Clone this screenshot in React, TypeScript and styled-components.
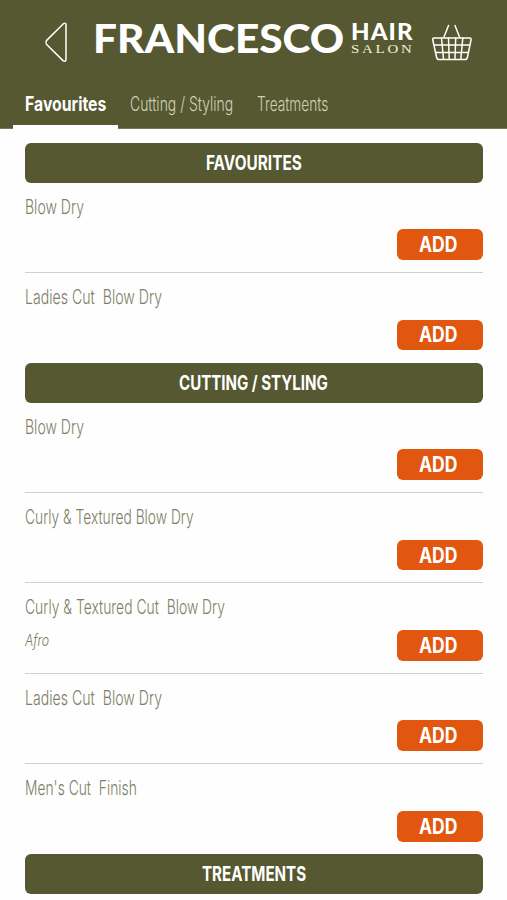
import React, { useLayoutEffect, useRef, useState } from "react";
import styled, { createGlobalStyle } from "styled-components";

const OLIVE = "#555830";
const ORANGE = "#e2570f";

const GlobalStyle = createGlobalStyle`
  * { box-sizing: border-box; }
  body { margin: 0; background: #fefefe; }
`;

/* Text narrowed horizontally to a condensed width. */
const Slot = styled.span<{ $width: number }>`
  display: block;
  flex: none;
  width: ${(p) => p.$width}px;
  white-space: pre;
`;

const Glyphs = styled.span`
  display: inline-block;
  transform-origin: 0 50%;
`;

function Condensed({ width, children }: { width: number; children: string }) {
  const ref = useRef<HTMLSpanElement>(null);
  const [scale, setScale] = useState(1);
  useLayoutEffect(() => {
    if (ref.current) setScale(width / ref.current.offsetWidth);
  }, [width, children]);
  return (
    <Slot $width={width}>
      <Glyphs ref={ref} style={{ transform: `scaleX(${scale})` }}>
        {children}
      </Glyphs>
    </Slot>
  );
}

const Page = styled.div`
  width: 507px;
  height: 900px;
  overflow: hidden;
  background: #fefefe;
  font-family: Inter, "Liberation Sans", sans-serif;
  color: ${OLIVE};
`;

const Header = styled.header`
  display: flex;
  flex-direction: column;
  justify-content: space-between;
  height: 129px;
  background: ${OLIVE};
  box-shadow: inset 0 -1px 0 #76795a;
  color: #fff;
`;

const Brand = styled.div`
  display: flex;
  align-items: flex-start;
  height: 78px;
  padding: 22px 0 0 44px;
`;

const IconButton = styled.button`
  display: block;
  flex: none;
  padding: 0;
  border: 0;
  background: none;
  line-height: 0;
`;

const Logo = styled.h1`
  display: flex;
  margin: 0 17px 0 24px;
  font-weight: 400;
`;

const LogoName = styled.span`
  width: 258px;
  font: 900 40.5px/32px Lato, sans-serif;
`;

const LogoSide = styled.span`
  display: flex;
  flex-direction: column;
  width: 63px;
`;

const LogoHair = styled.span`
  font: 900 22.5px/20px Lato, sans-serif;
  letter-spacing: 1px;
`;

const LogoSalon = styled.span`
  padding-top: 1px;
  color: #f0f0dc;
  font: 400 13.5px/12px "Liberation Serif", serif;
  letter-spacing: 2.5px;
`;

const Tabs = styled.nav`
  display: flex;
  padding-left: 13px;
`;

const Tab = styled.a<{ $active?: boolean }>`
  display: flex;
  height: 38px;
  padding: 0 12px;
  border-bottom: 4px solid ${(p) => (p.$active ? "#fff" : "transparent")};
  color: ${(p) => (p.$active ? "#fff" : "#d0d0b8")};
  font-size: 19.5px;
  font-weight: ${(p) => (p.$active ? 700 : 300)};
  line-height: 26px;
`;

const List = styled.main`
  padding: 13.5px 24.4px 0 25.1px;
`;

const SectionTitle = styled.h2`
  display: flex;
  align-items: center;
  justify-content: center;
  height: 40.1px;
  margin: 0;
  border-radius: 6px;
  background: ${OLIVE};
  color: #fff;
  font-size: 19.5px;
  font-weight: 700;
  line-height: 24px;
`;

const Row = styled.div`
  display: flex;
  justify-content: space-between;
  height: 90.4px;
  padding-top: 12px;
  border-bottom: 1px solid #cfcfcc;
  &:last-child {
    height: 89.6px;
    border-bottom: 0;
  }
`;

const Service = styled.div`
  color: #7c7e67;
  font-size: 20px;
  font-weight: 300;
  line-height: 24px;
`;

const Note = styled.div`
  margin-top: 10px;
  color: #7c7e67;
  font-size: 16.5px;
  font-style: italic;
  font-weight: 300;
  line-height: 22px;
`;

const AddButton = styled.button`
  display: flex;
  align-items: center;
  justify-content: center;
  width: 85.8px;
  height: 30.8px;
  margin: 34.6px 0 0;
  padding: 1px 2px 0 0;
  border: 0;
  border-radius: 6px;
  background: ${ORANGE};
  color: #fff;
  font: 700 21px/24px Inter, sans-serif;
`;

function BackIcon() {
  return (
    <svg width="25" height="41" viewBox="0 0 25 41" fill="none" stroke="#fff" strokeWidth="1.5" strokeLinejoin="round">
      <path d="M2.4 18.6 L19.4 1.7 Q22 0.3 22 3 V37.5 Q21.6 40.4 19 38.6 L2.4 22.2 Q1.2 20.4 2.4 18.6 Z" />
    </svg>
  );
}

function BasketIcon() {
  return (
    <svg width="42" height="40" viewBox="0 0 42 40" fill="none" stroke="#fff" strokeWidth="1.5" strokeLinecap="round" strokeLinejoin="round">
      <path d="M17.5 3.5 L13 15 M24 3.5 L28.5 15" />
      <path d="M3 16 H39 Q40.5 16 40 18 L36.5 35 Q36 37.5 34 37.5 H8 Q6 37.5 5.5 35 L1.8 18 Q1.5 16 3 16 Z" />
      <path d="M3.5 23 H38.5 M5 30.5 H37 M10.5 16 L12.5 37 M17.5 16 L18.2 37 M24.7 16 L24 37 M31.8 16 L29.8 37" />
    </svg>
  );
}

interface Item {
  name: string;
  width: number;
  note?: string;
}

interface Section {
  title: string;
  width: number;
  items: Item[];
}

const sections: Section[] = [
  {
    title: "FAVOURITES",
    width: 96,
    items: [
      { name: "Blow Dry", width: 59 },
      { name: "Ladies Cut  Blow Dry", width: 137 },
    ],
  },
  {
    title: "CUTTING / STYLING",
    width: 149,
    items: [
      { name: "Blow Dry", width: 59 },
      { name: "Curly & Textured Blow Dry", width: 169 },
      { name: "Curly & Textured Cut  Blow Dry", width: 200, note: "Afro" },
      { name: "Ladies Cut  Blow Dry", width: 137 },
      { name: "Men's Cut  Finish", width: 112 },
    ],
  },
  { title: "TREATMENTS", width: 104, items: [] },
];

export default function App() {
  return (
    <>
      <GlobalStyle />
      <Page>
        <Header>
          <Brand>
            <IconButton aria-label="Back">
              <BackIcon />
            </IconButton>
            <Logo>
              <LogoName>
                <Condensed width={251}>FRANCESCO</Condensed>
              </LogoName>
              <LogoSide>
                <LogoHair>
                  <Condensed width={63}>HAIR</Condensed>
                </LogoHair>
                <LogoSalon>
                  <Condensed width={64}>SALON</Condensed>
                </LogoSalon>
              </LogoSide>
            </Logo>
            <IconButton aria-label="Basket">
              <BasketIcon />
            </IconButton>
          </Brand>
          <Tabs>
            <Tab $active>
              <Condensed width={81}>Favourites</Condensed>
            </Tab>
            <Tab>
              <Condensed width={103}>Cutting / Styling</Condensed>
            </Tab>
            <Tab>
              <Condensed width={71}>Treatments</Condensed>
            </Tab>
          </Tabs>
        </Header>
        <List>
          {sections.map((section) => (
            <section key={section.title}>
              <SectionTitle>
                <Condensed width={section.width}>{section.title}</Condensed>
              </SectionTitle>
              {section.items.map((item) => (
                <Row key={item.name}>
                  <div>
                    <Service>
                      <Condensed width={item.width}>{item.name}</Condensed>
                    </Service>
                    {item.note && (
                      <Note>
                        <Condensed width={24}>{item.note}</Condensed>
                      </Note>
                    )}
                  </div>
                  <AddButton>
                    <Condensed width={38.5}>ADD</Condensed>
                  </AddButton>
                </Row>
              ))}
            </section>
          ))}
        </List>
      </Page>
    </>
  );
}
